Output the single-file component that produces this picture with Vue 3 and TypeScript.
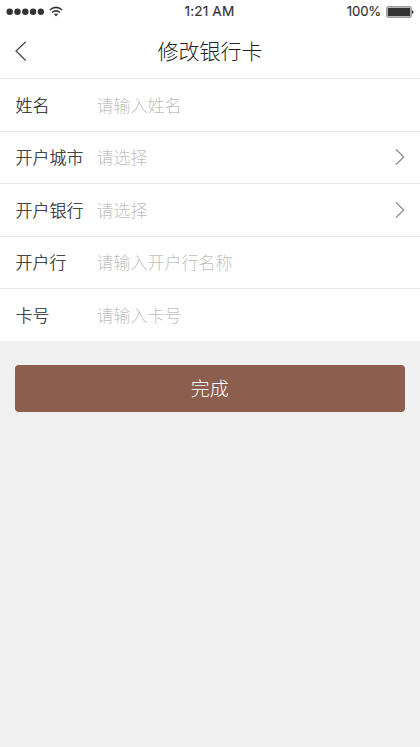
<script setup lang="ts">
interface Field {
  label: string
  hint: string
  select?: boolean
}

const fields: Field[] = [
  { label: '姓名', hint: '请输入姓名' },
  { label: '开户城市', hint: '请选择', select: true },
  { label: '开户银行', hint: '请选择', select: true },
  { label: '开户行', hint: '请输入开户行名称' },
  { label: '卡号', hint: '请输入卡号' },
]
</script>

<template>
  <main class="screen">
    <header class="status">
      <div class="signal">
        <svg class="dots" width="38" height="8" viewBox="0 0 38 8">
          <circle v-for="n in 5" :key="n" :cx="3.7 + (n - 1) * 7.8" cy="3.8" r="3.2" />
        </svg>
        <svg class="wifi" width="14" height="11" viewBox="0 0 14 11">
          <path d="M.8 4Q7-1.3 13.2 4M3 6.5Q7 3.3 11 6.5" />
          <path class="tip" d="M5 8.3Q7 6.7 9 8.3L7 10.4Z" />
        </svg>
      </div>
      <span class="time">1:21 AM</span>
      <div class="power">
        <span class="percent">100%</span>
        <svg width="28" height="12" viewBox="0 0 28 12">
          <rect class="case" x=".7" y=".7" width="24.6" height="10.6" rx="1.2" />
          <rect x="1.7" y="1.8" width="22.6" height="8.4" rx=".3" />
          <path d="M26 4.2Q27.6 4.6 27.6 6T26 7.8Z" />
        </svg>
      </div>
    </header>
    <nav class="nav">
      <svg class="back" width="12" height="20" viewBox="0 0 12 20"><path d="M10.7 .7L1 10L10.7 19.5" /></svg>
      <h1>修改银行卡</h1>
    </nav>
    <section class="form">
      <div v-for="field in fields" :key="field.label" class="row">
        <span class="label">{{ field.label }}</span>
        <span class="hint">{{ field.hint }}</span>
        <svg v-if="field.select" class="arrow" width="10" height="16" viewBox="0 0 10 16"><path d="M1 .3L8.7 8L1 15.7" /></svg>
      </div>
    </section>
    <button class="submit" type="button">完成</button>
  </main>
</template>

<style>
body { margin: 0; background: #f0f0f0; }
</style>

<style scoped>
.screen { box-sizing: border-box; min-height: 747px; background: #f0f0f0; color: #333; font-family: "Noto Sans CJK SC", sans-serif; }
.status { display: grid; grid-template-columns: 1fr auto 1fr; align-items: center; height: 23px; padding: 0 6px; background: #fff; font: 13.7px/23px Inter, sans-serif; }
.signal, .power { display: flex; align-items: center; gap: 5px; }
.power { justify-content: flex-end; }
.time { padding-right: 1px; font-weight: 400; letter-spacing: .1px; -webkit-text-stroke: .15px #333; }
.percent { font-size: 13.2px; font-weight: 400; letter-spacing: -.2px; -webkit-text-stroke: .15px #333; }
svg { display: block; fill: #333; }
.wifi path { fill: none; stroke: #333; stroke-width: 1.6; }
.wifi .tip { fill: #333; stroke: none; }
.case { fill: none; stroke: #888; }
.nav { display: grid; grid-template-columns: 30px 1fr 30px; align-items: center; height: 55px; padding: 0 15px; background: #fff; }
.back, .arrow { fill: none; stroke: #444; stroke-width: 1.2; }
h1 { margin: 0; padding-bottom: 2px; text-align: center; font-size: 21px; line-height: 30px; font-weight: 300; color: #222; }
.form { background: #fff; }
.row { display: flex; align-items: center; box-sizing: border-box; height: 52.5px; padding: 0 15px; border-top: 1px solid #e9e9e9; font-size: 17px; line-height: 25px; font-weight: 300; }
.label { width: 81px; padding: 0 0 1.2px .5px; white-space: nowrap; color: #2a2a2a; -webkit-text-stroke: .2px #2a2a2a; }
.hint { padding-bottom: 1.2px; color: #bfbfbf; }
.arrow { margin-left: auto; stroke: #888; }
.submit { display: block; width: 389.5px; height: 46.5px; margin: 24.5px 15px 0; padding: 0; border: 0; border-radius: 4px; background: #8c5e4e; color: #fff; font: 300 19px/46.5px "Noto Sans CJK SC", sans-serif; }
</style>
